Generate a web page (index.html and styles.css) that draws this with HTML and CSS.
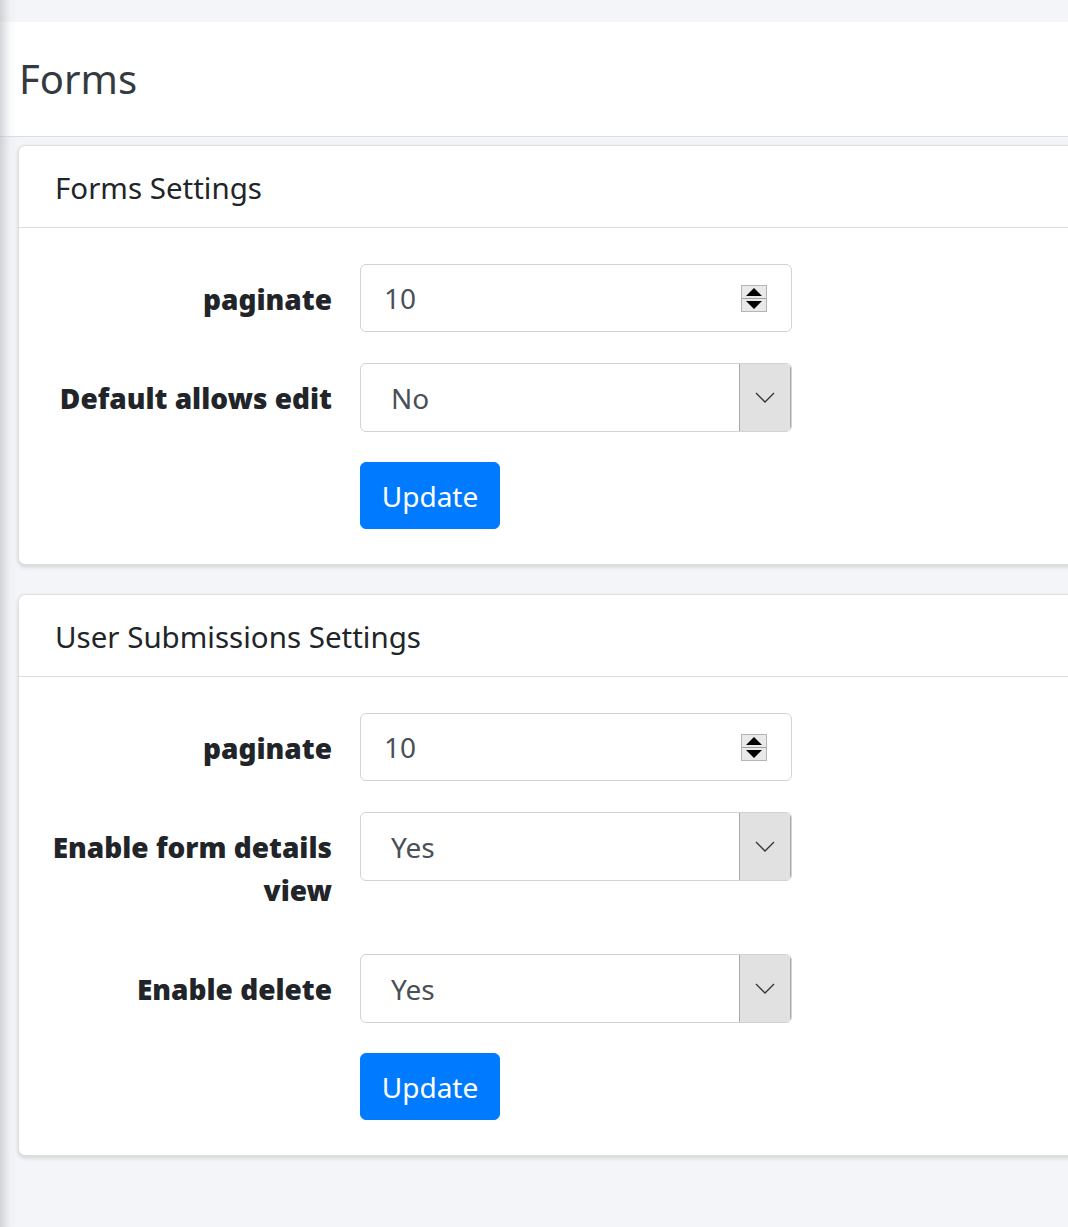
FILE: index.html
```html
<!DOCTYPE html>
<html lang="en">
<head>
<meta charset="utf-8">
<title>Forms</title>
<link rel="stylesheet" href="styles.css">
</head>
<body>
<div class="side-shadow"></div>
<div class="page">
  <header class="page-header">
    <h1 class="page-title">Forms</h1>
  </header>
  <main class="content">
    <section class="card">
      <div class="card-header">Forms Settings</div>
      <div class="card-body">
        <div class="form-row">
          <label class="form-label">paginate</label>
          <div class="num-input">
            <span class="num-value">10</span>
            <span class="spinner"><span class="spin spin-up"></span><span class="spin spin-down"></span></span>
          </div>
        </div>
        <div class="form-row">
          <label class="form-label">Default allows edit</label>
          <div class="select">
            <span class="select-value">No</span>
            <span class="select-arrow"><svg width="20" height="11" viewBox="0 0 20 11"><path d="M1 1 L10 10 L19 1" fill="none" stroke="#333" stroke-width="1.3"/></svg></span>
          </div>
        </div>
        <div class="form-row form-row-last">
          <span></span>
          <div><button class="btn">Update</button></div>
        </div>
      </div>
    </section>

    <section class="card">
      <div class="card-header">User Submissions Settings</div>
      <div class="card-body">
        <div class="form-row">
          <label class="form-label">paginate</label>
          <div class="num-input">
            <span class="num-value">10</span>
            <span class="spinner"><span class="spin spin-up"></span><span class="spin spin-down"></span></span>
          </div>
        </div>
        <div class="form-row">
          <label class="form-label">Enable form details view</label>
          <div class="select">
            <span class="select-value">Yes</span>
            <span class="select-arrow"><svg width="20" height="11" viewBox="0 0 20 11"><path d="M1 1 L10 10 L19 1" fill="none" stroke="#333" stroke-width="1.3"/></svg></span>
          </div>
        </div>
        <div class="form-row">
          <label class="form-label">Enable delete</label>
          <div class="select">
            <span class="select-value">Yes</span>
            <span class="select-arrow"><svg width="20" height="11" viewBox="0 0 20 11"><path d="M1 1 L10 10 L19 1" fill="none" stroke="#333" stroke-width="1.3"/></svg></span>
          </div>
        </div>
        <div class="form-row form-row-last">
          <span></span>
          <div><button class="btn">Update</button></div>
        </div>
      </div>
    </section>
  </main>
</div>
</body>
</html>
```

FILE: styles.css
```css
html, body {
  margin: 0;
  padding: 0;
}
body {
  background: #f4f5f8;
  font-family: "Noto Sans", "Open Sans", "Liberation Sans", sans-serif;
  color: #212529;
  overflow: hidden;
  width: 1068px;
  height: 1227px;
}
.side-shadow {
  position: fixed;
  left: 0;
  top: 0;
  bottom: 0;
  width: 16px;
  background: linear-gradient(to right, rgba(180,182,188,0.55), rgba(220,222,228,0.2) 60%, rgba(255,255,255,0));
  pointer-events: none;
  z-index: 5;
}
.page {
  padding-top: 22px;
}
.page-header {
  background: #fff;
  height: 115px;
  border-bottom: 1px solid #dcdde2;
  display: flex;
  align-items: center;
  padding-left: 19px;
  box-sizing: border-box;
}
.page-title {
  margin: 0;
  font-size: 40px;
  font-weight: 400;
  color: #343a40;
  line-height: 1.2;
}
.content {
  padding: 8px 0 0 18px;
}
.card {
  width: 1200px;
  background: #fff;
  border: 1px solid rgba(0,0,0,0.125);
  border-radius: 7px;
  box-shadow: 0 2px 4px rgba(0,0,0,0.14);
  margin-bottom: 29px;
}
.card-header {
  height: 82px;
  box-sizing: border-box;
  padding: 1px 36px 0;
  display: flex;
  align-items: center;
  border-bottom: 1px solid #dcdcdc;
  font-size: 29.5px;
  color: #212529;
}
.card-body {
  padding: 36px 35px 35px 13px;
}
.form-row {
  display: grid;
  grid-template-columns: 300px 432px;
  column-gap: 28px;
  margin-bottom: 30px;
  align-items: start;
}
.form-row-last {
  margin-bottom: 0;
}
.form-label {
  text-align: right;
  font-weight: 900;
  font-size: 28px;
  line-height: 43px;
  padding: 14px 0 12px;
  color: #212529;
}
.num-input {
  height: 68px;
  box-sizing: border-box;
  border: 1px solid #ced4da;
  border-radius: 6px;
  display: flex;
  align-items: center;
  justify-content: space-between;
  padding: 0 24px 0 23px;
}
.num-value {
  font-size: 28px;
  color: #495057;
}
.spinner {
  display: flex;
  flex-direction: column;
  width: 26px;
  height: 27px;
  border: 1px solid #b5b5b5;
  box-sizing: border-box;
  background: #e9e9e9;
}
.spin {
  flex: 1;
  position: relative;
}
.spin-up {
  border-bottom: 1px solid #a0a0a0;
}
.spin-up::after,
.spin-down::after {
  content: "";
  position: absolute;
  left: 50%;
  top: 50%;
  width: 0;
  height: 0;
  transform: translate(-50%, -50%);
  border-left: 8px solid transparent;
  border-right: 8px solid transparent;
}
.spin-up::after {
  border-bottom: 8px solid #000;
}
.spin-down::after {
  border-top: 8px solid #000;
}
.select {
  height: 69px;
  box-sizing: border-box;
  border: 1px solid #ced4da;
  border-radius: 6px;
  display: flex;
  align-items: stretch;
  overflow: hidden;
}
.select-value {
  flex: 1;
  display: flex;
  align-items: center;
  padding-left: 30px;
  font-size: 28px;
  color: #495057;
}
.select-arrow {
  width: 50px;
  background: #e1e1e1;
  border-left: 1px solid #a9a9a9;
  border-right: 1px solid #a9a9a9;
  display: flex;
  align-items: center;
  justify-content: center;
}
.btn {
  background: #007bff;
  color: #fff;
  border: 1px solid #007bff;
  border-radius: 6px;
  height: 67px;
  width: 140px;
  font-family: inherit;
  font-size: 28px;
  padding: 0;
  cursor: pointer;
}
```
